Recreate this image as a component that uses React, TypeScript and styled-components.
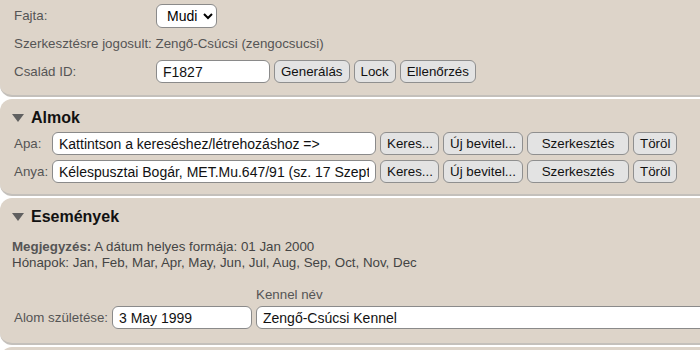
import React from "react";
import styled, { createGlobalStyle } from "styled-components";

const GlobalStyle = createGlobalStyle`
  html, body {
    margin: 0;
    padding: 0;
    background: #ffffff;
    overflow: hidden;
  }
  body {
    font-family: "Liberation Sans", Arial, sans-serif;
    color: #555;
  }
`;

const Page = styled.div`
  width: 760px;
  display: flex;
  flex-direction: column;
  gap: 2px;
`;

const Panel = styled.section<{ $top?: boolean }>`
  background: #ddd4c9;
  border-bottom: 2px solid #c4c0bb;
  border-radius: ${p => (p.$top ? "0 0 12px 12px" : "12px")};
  padding: ${p => (p.$top ? "4px 0 12px 14px" : "9px 0 11px 12px")};
`;

const FormGrid = styled.div`
  display: grid;
  grid-template-columns: 142px auto;
  grid-auto-rows: 23px;
  row-gap: 5px;
  align-items: center;
`;

const Label = styled.span`
  font-size: 13.33px;
  color: #555;
  white-space: nowrap;
`;

const Inline = styled.div`
  display: flex;
  align-items: center;
  gap: 4px;
`;

const Select = styled.select`
  font-family: "Liberation Sans", Arial, sans-serif;
  font-size: 14px;
  height: 24px;
  width: 61px;
  border: 1px solid #8a8a8a;
  border-radius: 6px;
  background: #fff;
  color: #000;
  padding: 0 2px 0 6px;
`;

const Input = styled.input<{ $w: number }>`
  box-sizing: border-box;
  font-family: "Liberation Sans", Arial, sans-serif;
  font-size: 14px;
  width: ${p => p.$w}px;
  height: 23px;
  border: 1px solid #8a8a8a;
  border-radius: 6px;
  background: #fff;
  color: #111;
  padding: 0 6px;
  outline: none;
`;

const Button = styled.button<{ $w?: number }>`
  box-sizing: border-box;
  font-family: "Liberation Sans", Arial, sans-serif;
  font-size: 13.33px;
  height: 23px;
  ${p => (p.$w ? `width: ${p.$w}px;` : "")}
  border: 1px solid #8f8f8f;
  border-radius: 6px;
  background: #e3e3e3;
  color: #111;
  padding: 0 6px;
  white-space: nowrap;
`;

const Heading = styled.h3`
  margin: 0;
  display: flex;
  align-items: center;
  gap: 7px;
  font-size: 16px;
  font-weight: bold;
  color: #111;
  line-height: 20px;
`;

const Arrow: React.FC = () => (
  <svg width="12" height="8" viewBox="0 0 12 8">
    <polygon points="0,0 12,0 6,8" fill="#606060" />
  </svg>
);

const ParentRows = styled.div`
  margin-top: 4px;
  display: flex;
  flex-direction: column;
  gap: 5px;
`;

const ParentRow = styled.div`
  display: grid;
  grid-template-columns: 38px auto;
  align-items: center;
  padding-left: 2px;
`;

const Note = styled.div`
  font-size: 13.33px;
  line-height: 16px;
  color: #444;
  margin-top: 12px;
  b {
    color: #555;
  }
`;

const EventGrid = styled.div`
  margin-top: 14px;
  display: grid;
  grid-template-columns: 98px 144px auto;
  grid-template-rows: 18px 23px;
  row-gap: 3px;
  align-items: center;
  padding-left: 2px;
  padding-bottom: 3px;
`;

const NextPanel = styled.section`
  background: #ddd4c9;
  border-radius: 12px;
  height: 60px;
`;

const App: React.FC = () => {
  return (
    <>
      <GlobalStyle />
      <Page>
        <Panel $top>
          <FormGrid>
            <Label>Fajta:</Label>
            <div>
              <Select defaultValue="Mudi">
                <option>Mudi</option>
              </Select>
            </div>
            <Label style={{ gridColumn: "1 / span 2" }}>
              Szerkesztésre jogosult: Zengő-Csúcsi (zengocsucsi)
            </Label>
            <Label>Család ID:</Label>
            <Inline>
              <Input $w={114} defaultValue="F1827" />
              <Button>Generálás</Button>
              <Button>Lock</Button>
              <Button>Ellenőrzés</Button>
            </Inline>
          </FormGrid>
        </Panel>

        <Panel>
          <Heading>
            <Arrow />
            Almok
          </Heading>
          <ParentRows>
            <ParentRow>
              <Label>Apa:</Label>
              <Inline>
                <Input $w={324} defaultValue="Kattintson a kereséshez/létrehozáshoz =>" />
                <Button $w={59}>Keres...</Button>
                <Button $w={80}>Új bevitel...</Button>
                <Button $w={102}>Szerkesztés</Button>
                <Button $w={44}>Töröl</Button>
              </Inline>
            </ParentRow>
            <ParentRow>
              <Label>Anya:</Label>
              <Inline>
                <Input
                  $w={324}
                  defaultValue="Kélespusztai Bogár, MET.Mu.647/91 (sz. 17 Szept 1991)"
                />
                <Button $w={59}>Keres...</Button>
                <Button $w={80}>Új bevitel...</Button>
                <Button $w={102}>Szerkesztés</Button>
                <Button $w={44}>Töröl</Button>
              </Inline>
            </ParentRow>
          </ParentRows>
        </Panel>

        <Panel>
          <Heading>
            <Arrow />
            Események
          </Heading>
          <Note>
            <b>Megjegyzés:</b> A dátum helyes formája: 01 Jan 2000
            <br />
            Hónapok: Jan, Feb, Mar, Apr, May, Jun, Jul, Aug, Sep, Oct, Nov, Dec
          </Note>
          <EventGrid>
            <span />
            <span />
            <Label>Kennel név</Label>
            <Label>Alom születése:</Label>
            <Input $w={140} defaultValue="3 May 1999" />
            <Input $w={470} defaultValue="Zengő-Csúcsi Kennel" />
          </EventGrid>
        </Panel>

        <NextPanel />
      </Page>
    </>
  );
};

export default App;
